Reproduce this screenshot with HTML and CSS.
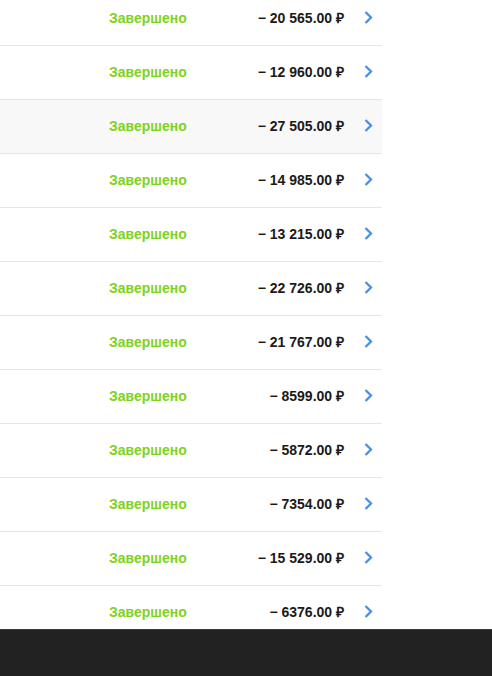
FILE: index.html
```html
<!DOCTYPE html>
<html lang="ru">
<head>
    <meta charset="UTF-8">
    <meta name="viewport" content="width=device-width, initial-scale=1.0">
    <title>Операции</title>
    <link rel="stylesheet" href="styles.css">
</head>
<body>
    <div class="page">
        <div class="list">
            <div class="rows">
                <div class="row"><span class="status">Завершено</span><span class="amount">&minus; 20 565.00 &#8381;</span><svg class="arrow" viewBox="0 0 9 13"><path d="M1.5 1 L7 6.5 L1.5 12"/></svg></div>
                <div class="row"><span class="status">Завершено</span><span class="amount">&minus; 12 960.00 &#8381;</span><svg class="arrow" viewBox="0 0 9 13"><path d="M1.5 1 L7 6.5 L1.5 12"/></svg></div>
                <div class="row active"><span class="status">Завершено</span><span class="amount">&minus; 27 505.00 &#8381;</span><svg class="arrow" viewBox="0 0 9 13"><path d="M1.5 1 L7 6.5 L1.5 12"/></svg></div>
                <div class="row"><span class="status">Завершено</span><span class="amount">&minus; 14 985.00 &#8381;</span><svg class="arrow" viewBox="0 0 9 13"><path d="M1.5 1 L7 6.5 L1.5 12"/></svg></div>
                <div class="row"><span class="status">Завершено</span><span class="amount">&minus; 13 215.00 &#8381;</span><svg class="arrow" viewBox="0 0 9 13"><path d="M1.5 1 L7 6.5 L1.5 12"/></svg></div>
                <div class="row"><span class="status">Завершено</span><span class="amount">&minus; 22 726.00 &#8381;</span><svg class="arrow" viewBox="0 0 9 13"><path d="M1.5 1 L7 6.5 L1.5 12"/></svg></div>
                <div class="row"><span class="status">Завершено</span><span class="amount">&minus; 21 767.00 &#8381;</span><svg class="arrow" viewBox="0 0 9 13"><path d="M1.5 1 L7 6.5 L1.5 12"/></svg></div>
                <div class="row"><span class="status">Завершено</span><span class="amount">&minus; 8599.00 &#8381;</span><svg class="arrow" viewBox="0 0 9 13"><path d="M1.5 1 L7 6.5 L1.5 12"/></svg></div>
                <div class="row"><span class="status">Завершено</span><span class="amount">&minus; 5872.00 &#8381;</span><svg class="arrow" viewBox="0 0 9 13"><path d="M1.5 1 L7 6.5 L1.5 12"/></svg></div>
                <div class="row"><span class="status">Завершено</span><span class="amount">&minus; 7354.00 &#8381;</span><svg class="arrow" viewBox="0 0 9 13"><path d="M1.5 1 L7 6.5 L1.5 12"/></svg></div>
                <div class="row"><span class="status">Завершено</span><span class="amount">&minus; 15 529.00 &#8381;</span><svg class="arrow" viewBox="0 0 9 13"><path d="M1.5 1 L7 6.5 L1.5 12"/></svg></div>
                <div class="row"><span class="status">Завершено</span><span class="amount">&minus; 6376.00 &#8381;</span><svg class="arrow" viewBox="0 0 9 13"><path d="M1.5 1 L7 6.5 L1.5 12"/></svg></div>
            </div>
        </div>
        <div class="footer"></div>
    </div>
</body>
</html>
```

FILE: styles.css
```css
body {
    margin: 0;
    padding: 0;
    background: #fff;
    font-family: "Liberation Sans", Arial, sans-serif;
}

.page {
    display: flex;
    flex-direction: column;
    height: 100vh;
}

.list {
    flex: 1;
    overflow: hidden;
}

.rows {
    width: 382px;
    margin-top: -8px; /* list is scrolled a bit */
}

.row {
    display: flex;
    align-items: center;
    box-sizing: border-box;
    height: 54px;
    padding-bottom: 2px;
    border-bottom: 1px solid #e6e6e6;
    font-size: 14px;
    font-weight: bold;
}

.row.active {
    background-color: #f8f8f8;
}

.status {
    margin-left: 109px;
    color: #7ed321;
}

.amount {
    flex: 1;
    text-align: right;
    color: #1a1a1a;
}

.arrow {
    width: 9px;
    height: 13px;
    margin: 0 9px 0 20px;
    fill: none;
    stroke: #4a90e2;
    stroke-width: 2.3;
}

.footer {
    height: 46px;
    background-color: #222;
    border-top: 1px solid #3a3a3a;
}
```
